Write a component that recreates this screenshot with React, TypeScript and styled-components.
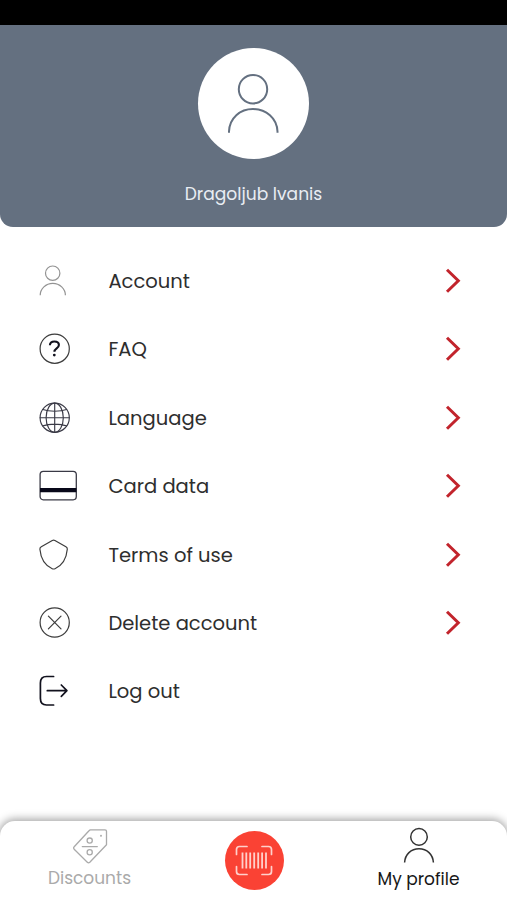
import React from "react";
import styled, { createGlobalStyle } from "styled-components";

const GlobalStyle = createGlobalStyle`
  * { box-sizing: border-box; }
  body { margin: 0; background: #fff; }
`;

const Screen = styled.div`
  width: 507px;
  height: 900px;
  display: flex;
  flex-direction: column;
  overflow: hidden;
  background: #fff;
  font-family: Poppins, Inter, sans-serif;
  font-feature-settings: "cv11";
`;

const StatusBar = styled.div`
  height: 25px;
  background: #000;
`;

const Header = styled.header`
  height: 202px;
  padding-top: 23px;
  display: flex;
  flex-direction: column;
  align-items: center;
  background: #647080;
  border-radius: 0 0 13px 13px;
`;

const Avatar = styled.div`
  width: 111px;
  height: 111px;
  border-radius: 50%;
  background: #fff;
  display: flex;
`;

const Label = styled.span<{ $size: number; $color: string }>`
  font-size: ${(p) => p.$size}px;
  color: ${(p) => p.$color};
  line-height: 24px;
  white-space: nowrap;
`;

const UserName = styled(Label)`
  margin-top: 23px;
`;

const Menu = styled.main`
  flex: 1;
  padding: 19.8px 44px 0 38px;
`;

const MenuRow = styled.div`
  height: 68.4px;
  display: flex;
  align-items: center;
`;

const MenuText = styled(Label)`
  margin-left: 30.4px;
  flex: 1;
`;

const Svg = styled.svg`
  display: block;
  flex: none;
  fill: none;
  stroke-linecap: round;
  stroke-linejoin: round;
`;

const Nav = styled.nav`
  height: 79.5px;
  display: grid;
  grid-template-columns: 179px 150px 179px;
  background: #fff;
  border-radius: 15px 15px 0 0;
  box-shadow: 0 -1px 9px 1px rgba(0, 0, 0, 0.36);
`;

const NavItem = styled.div`
  display: flex;
  flex-direction: column;
  align-items: center;
  padding-top: 5px;
`;

const ScanSlot = styled.div`
  display: flex;
  justify-content: center;
  padding-top: 10px;
`;

const ScanButton = styled.div`
  width: 59px;
  height: 59px;
  border-radius: 50%;
  background: #fa4234;
`;

const NavText = styled(Label)<{ $top: number }>`
  margin-top: ${(p) => p.$top}px;
`;

const icons: Record<string, React.ReactNode> = {
  account: (
    <g stroke="#939393" strokeWidth="1.2" strokeLinecap="butt">
      <circle cx="14.7" cy="12.2" r="7.2" />
      <path d="M2.2 34.3a12.6 12 0 0 1 25.2 0" />
    </g>
  ),
  faq: (
    <g stroke="#3c3c3c" strokeWidth="1.2">
      <circle cx="16.7" cy="19.7" r="14.6" />
      <path
        d="M11.9 16.300C12 13.800 13.800 12.500 16.400 12.500c2.800 0 4.500 1.300 4.500 3.500 0 3.400-4.500 3.300-4.500 6.800"
        stroke="#11111d"
        strokeWidth="2.1"
        strokeLinecap="butt"
      />
      <circle cx="16.3" cy="26.100" r="1.400" fill="#11111d" stroke="none" />
    </g>
  ),
  language: (
    <g stroke="#3a3a46" strokeWidth="1.150">
      <circle cx="16.7" cy="19.7" r="14.6" />
      <ellipse cx="16.7" cy="19.7" rx="8.6" ry="14.6" />
      <path d="M16.7 5.1v29.2M2.1 19.7h29.2M4.800 11.500c6.500 2.300 17.300 2.300 23.800 0M4.800 27.900c6.500-2.300 17.300-2.300 23.800 0" />
    </g>
  ),
  card: (
    <g stroke="#3a3a46" strokeWidth="1.3">
      <rect x="2.1" y="5.4" width="36.2" height="28.4" rx="3.200" />
      <path d="M2 24.1h36.4" stroke="#080819" strokeWidth="4.2" strokeLinecap="butt" />
    </g>
  ),
  terms: (
    <path
      d="M14.300 5.500q1.300-.7 2.600 0L27.900 11.800Q29.500 12.700 29.300 14.300C28.500 23 24.500 30.400 17 33.700q-1.400.6-2.800 0C6.700 30.400 2.700 23 1.900 14.300Q1.700 12.700 3.300 11.800Z"
      stroke="#3c3c3c"
      strokeWidth="1.2"
    />
  ),
  delete: (
    <g stroke="#3c3c3c" strokeWidth="1.2">
      <circle cx="16.7" cy="19.5" r="14.6" />
      <path d="M10.400 13.200l12.600 12.600M23 13.200L10.400 25.800" />
    </g>
  ),
  logout: (
    <g stroke="#11111d" strokeWidth="1.7">
      <path d="M15.600 5.500H8.500Q2.400 5.500 2.400 12v15.600Q2.400 34 8.500 34h7.100M9.300 19.700h19.200M23.300 14l5.600 5.700-5.600 5.700" />
    </g>
  ),
};

const rows = [
  { icon: "account", label: "Account" },
  { icon: "faq", label: "FAQ" },
  { icon: "language", label: "Language" },
  { icon: "card", label: "Card data" },
  { icon: "terms", label: "Terms of use" },
  { icon: "delete", label: "Delete account" },
  { icon: "logout", label: "Log out" },
];

const Chevron = () => (
  <Svg width="20" height="30" viewBox="0 0 20 30">
    <path
      d="M4 3.700L15.300 14.700 4 25.700"
      stroke="#c2242c"
      strokeWidth="3"
      strokeLinecap="butt"
      strokeLinejoin="miter"
    />
  </Svg>
);

export default function App() {
  return (
    <Screen>
      <GlobalStyle />
      <StatusBar />
      <Header>
        <Avatar>
          <Svg width="111" height="111" viewBox="0 0 111 111" stroke="#647080" strokeWidth="2">
            <circle cx="55" cy="41.200" r="14.200" />
            <path d="M31 84.800V83.500C31.500 70 42 61 55 61s24 9 24.500 22.500v1.300" strokeLinecap="butt" />
          </Svg>
        </Avatar>
        <UserName $size={17.1} $color="#e9edf3">Dragoljub Ivanis</UserName>
      </Header>
      <Menu>
        {rows.map((r) => (
          <MenuRow key={r.label}>
            <Svg width="40" height="40" viewBox="0 0 40 40">{icons[r.icon]}</Svg>
            <MenuText $size={19.55} $color="#2e2e2e">{r.label}</MenuText>
            {r.icon !== "logout" && <Chevron />}
          </MenuRow>
        ))}
      </Menu>
      <Nav>
        <NavItem>
          <Svg width="40" height="40" viewBox="0 0 40 40" stroke="#aaa" strokeWidth="1.300">
            <path d="M20.500 3.800H35Q36.500 3.800 36.500 5.300v13.500L19.800 36.300q-1.300 1.200-2.500 0L4.200 23.200q-1.200-1.200 0-2.400L19 4.700q.7-.8 1.500-.9Z" />
            <circle cx="19.700" cy="14.600" r="2.600" />
            <circle cx="19.700" cy="26.300" r="2.600" />
            <path d="M12.300 20.600h15" />
            <circle cx="31" cy="9.800" r=".4" />
          </Svg>
          <NavText $top={0} $size={17} $color="#aaa">Discounts</NavText>
        </NavItem>
        <ScanSlot>
          <ScanButton>
            <Svg width="59" height="59" viewBox="0 0 59 59" stroke="#ffd0cb" strokeWidth="1.700">
              <path d="M11.500 23.500v-5Q11.500 15.500 14.500 15.500h7.500M37 15.500h6.500Q46.500 15.500 46.500 18.500v5M46.500 35.500v5Q46.500 43.500 43.500 43.500H37M22 43.500h-7.500Q11.500 43.500 11.500 40.500v-5" />
              <path
                d="M17.500 21.500v16M21.300 21.500v16M25.200 21.500v16M29.200 21.500v16M33.200 21.500v16M37.100 21.500v16M41 21.500v16"
                strokeWidth="1.800"
                strokeLinecap="butt"
              />
            </Svg>
          </ScanButton>
        </ScanSlot>
        <NavItem>
          <Svg width="40" height="40" viewBox="0 0 40 40" stroke="#333" strokeWidth="1.500">
            <circle cx="20" cy="10.900" r="8.300" />
            <path d="M5.600 36.500C6 28.500 12 22.700 20 22.700s14 5.800 14.400 13.800" strokeLinecap="butt" />
          </Svg>
          <NavText $top={1} $size={17} $color="#161616">My profile</NavText>
        </NavItem>
      </Nav>
    </Screen>
  );
}
